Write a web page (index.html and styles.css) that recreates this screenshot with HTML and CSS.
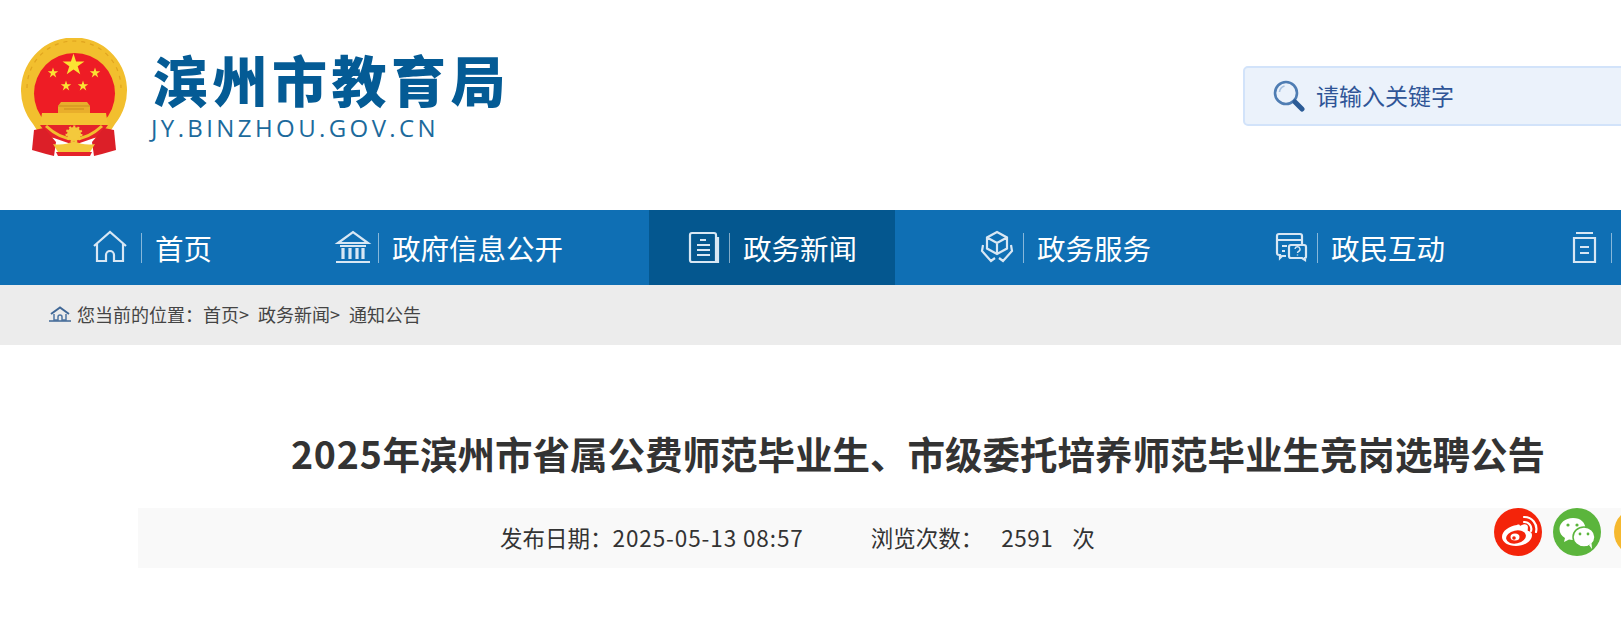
FILE: index.html
```html
<!DOCTYPE html>
<html lang="zh-CN">
<head>
<meta charset="utf-8">
<title>2025年滨州市省属公费师范毕业生、市级委托培养师范毕业生竞岗选聘公告</title>
<link rel="stylesheet" href="styles.css">
</head>
<body>
<div class="page">

    <div class="header">
        <div class="logo">
            <svg class="emblem" viewBox="0 0 108 120">
                <defs>
                    <polygon id="star" points="0,-1 .225,-.309 .951,-.309 .363,.118 .588,.809 0,.382 -.588,.809 -.363,.118 -.951,-.309 -.225,-.309"/>
                </defs>
                <path d="M13 86A53 53 0 1 1 95 86L86 100H22z" fill="#f2bf2e"/>
                <path d="M7 50A47 47 0 0 1 101 50" fill="none" stroke="#e0a41f" stroke-width="1.200" stroke-dasharray="4 5"/>
                <circle cx="54.500" cy="55.500" r="40.500" fill="#ee1c25"/>
                <use href="#star" transform="translate(53.500 27) scale(11.500)" fill="#fbe233"/>
                <use href="#star" transform="translate(33 35) scale(5.500)" fill="#fbe233"/>
                <use href="#star" transform="translate(75 35) scale(5.500)" fill="#fbe233"/>
                <use href="#star" transform="translate(46 48) scale(5.500)" fill="#fbe233"/>
                <use href="#star" transform="translate(63 48) scale(5.500)" fill="#fbe233"/>
                <path d="M41 64h26l3 4v7H38v-7z" fill="#e9ae2b"/>
                <path d="M38 68h32M44 71h20" stroke="#c98f1e" stroke-width="1"/>
                <path d="M22 75h64l2 12H20z" fill="#f4c233"/>
                <path d="M20 87h68l-8 11-26 9-26-9z" fill="#e5222a"/>
                <path d="M26 88Q54 114 82 88" fill="none" stroke="#f2bf2e" stroke-width="3"/>
                <circle cx="54" cy="96" r="7" fill="#f4c93c" stroke="#f4c93c" stroke-width="3" stroke-dasharray="2 2"/>
                <path d="M14 92L24 90 36 104 34 118 26 116 12 112z" fill="#dc1f28"/>
                <path d="M94 92L84 90 72 104 74 118 82 116 96 112z" fill="#dc1f28"/>
                <path d="M33 106Q44 108 54 103 64 108 75 106L70 114H38z" fill="#f4c93c"/>
                <path d="M36 114H72L70 118H38z" fill="#e5222a"/>
            </svg>
            <div class="logo-text">
                <div class="logo-name">滨州市教育局</div>
                <div class="logo-url">JY.BINZHOU.GOV.CN</div>
            </div>
        </div>
        <div class="search">
            <svg class="search-icon" viewBox="0 0 32 32">
                <circle cx="13" cy="13" r="11" fill="none" stroke="#4f7db3" stroke-width="2.600"/>
                <path d="M6.500 12a7 7 0 0 1 5-6" fill="none" stroke="#a9c2e0" stroke-width="1.600"/>
                <path d="M22 22l7 7" stroke="#2b5b96" stroke-width="5" stroke-linecap="round"/>
            </svg>
            <span class="search-text">请输入关键字</span>
        </div>
    </div>

    <div class="nav">
        <a class="nav-item" href="#">
            <svg class="nav-icon" viewBox="0 0 46 40">
                <path d="M1 18L17 4l16 14M4 16v17h9v-6a4 4 0 0 1 8 0v6h9V16"/>
            </svg>
            <span class="nav-label">首页</span>
        </a>
        <a class="nav-item" href="#">
            <svg class="nav-icon" viewBox="0 0 46 40">
                <path d="M8 15L23 4l15 11zM10 18h26M6 34h34"/>
                <path class="nav-icon-thick" d="M13 20v11M20 20v11M27 20v11M33 20v11"/>
            </svg>
            <span class="nav-label">政府信息公开</span>
        </a>
        <a class="nav-item active" href="#">
            <svg class="nav-icon" viewBox="0 0 46 40">
                <path d="M11 5h22a2 2 0 0 1 2 2v27H11a2 2 0 0 1-2-2V7a2 2 0 0 1 2-2zM35 10h2v24h-2M19 12h6M16 17h13M16 22h13M16 27h13"/>
            </svg>
            <span class="nav-label">政务新闻</span>
        </a>
        <a class="nav-item" href="#">
            <svg class="nav-icon" viewBox="0 0 46 40">
                <path d="M22 4l10 5.500v11L22 26l-10-5.500v-11zM12 9.500l10 5.500 10-5.500M22 15v11M8 17l-1 6 9 10 4-3M36 17l1 6-9 10-4-3"/>
            </svg>
            <span class="nav-label">政务服务</span>
        </a>
        <a class="nav-item" href="#">
            <svg class="nav-icon" viewBox="0 0 46 40">
                <path d="M17 28h-4l-2 2v-3H10a2 2 0 0 1-2-2V8a2 2 0 0 1 2-2h21a2 2 0 0 1 2 2v8M8 12h25M13 18h5M13 23h3"/>
                <path d="M22 17h13a2 2 0 0 1 2 2v10a1 1 0 0 1-1 1v2l-3-2H22a2 2 0 0 1-2-2V19a2 2 0 0 1 2-2z"/>
                <path class="nav-icon-thin" d="M26 21a2.500 2.500 0 1 1 3.500 2.500c-.8.4-1 .8-1 1.500M28.500 26.500v1"/>
            </svg>
            <span class="nav-label">政民互动</span>
        </a>
        <a class="nav-item" href="#">
            <svg class="nav-icon" viewBox="0 0 46 40">
                <path d="M13 5h17M11 10h21v24H11zM17 19h9M17 25h9"/>
            </svg>
            <span class="nav-label"></span>
        </a>
    </div>

    <div class="crumb">
        <svg class="crumb-icon" viewBox="0 0 22 16">
            <path d="M2 8l9-6.500L20 8" fill="none" stroke="#3f6796" stroke-width="2"/>
            <path d="M5 8v6h4v-3a2 2 0 0 1 4 0v3h4V8" fill="none" stroke="#4f76a3" stroke-width="1.500"/>
            <path d="M0 15h22" stroke="#3f6796" stroke-width="1.500"/>
        </svg>
        <span>您当前的位置：</span>
        <a class="crumb-link" href="#">首页&gt; </a>
        <a class="crumb-link" href="#">政务新闻&gt; </a>
        <a class="crumb-link" href="#">通知公告</a>
    </div>

    <div class="article">
        <h1 class="title"><span class="title-year">2025</span>年滨州市省属公费师范毕业生、市级委托培养师范毕业生竞岗选聘公告</h1>
        <div class="meta">
            <span>发布日期：</span>
            <span class="meta-date">2025-05-13 08:57</span>
            <span class="meta-views">浏览次数：</span>
            <span class="meta-count">2591</span>
            <span>次</span>
            <div class="share">
                <a class="share-btn weibo" href="#">
                    <svg viewBox="0 0 48 48">
                        <path d="M23 17c-8 1-15 6-15 12 0 5 6 9 14 9 9 0 16-5 16-11 0-3-3-4-4-4-1-1 1-4-1-6s-6 0-7 1c0-1-1-2-3-1z" fill="#fff"/>
                        <ellipse cx="22" cy="29" rx="10" ry="6.500" fill="#f4240a" transform="rotate(-12 22 29)"/>
                        <ellipse cx="21" cy="29" rx="4.500" ry="3.500" fill="#fff"/>
                        <circle cx="20" cy="30" r="1.800" fill="#f4240a"/>
                        <path d="M30 14a7 7 0 0 1 7 9M30 9a12 12 0 0 1 12 15" fill="none" stroke="#fff" stroke-width="2.200" stroke-linecap="round"/>
                    </svg>
                </a>
                <a class="share-btn wechat" href="#">
                    <svg viewBox="0 0 48 48">
                        <path d="M20 10c-8 0-13.500 5-13.500 11 0 4 2 7 5.500 9l-1 4 5-2.500c1 .3 2 .4 3.500 .4 8 0 13-5 13-11S28 10 20 10z" fill="#fff"/>
                        <ellipse cx="31" cy="29" rx="11" ry="10" fill="#fff" stroke="#5bb53c" stroke-width="1.500"/>
                        <path d="M36 37l3 4-.5-6z" fill="#fff"/>
                        <circle cx="15" cy="17" r="1.600" fill="#5bb53c"/>
                        <circle cx="24" cy="17" r="1.600" fill="#5bb53c"/>
                        <circle cx="27" cy="26" r="1.400" fill="#5bb53c"/>
                        <circle cx="35" cy="26" r="1.400" fill="#5bb53c"/>
                    </svg>
                </a>
                <a class="share-btn third" href="#"></a>
            </div>
        </div>
    </div>

</div>
</body>
</html>
```
FILE: styles.css
```css
@charset "utf-8";

* {
    margin: 0;
    padding: 0;
    box-sizing: border-box;
}

html, body {
    height: 100%;
    overflow: hidden;
    background: #fff;
}

body {
    font-family: "Noto Sans CJK SC", "Noto Sans", sans-serif;
    color: #333;
}

a {
    color: inherit;
    text-decoration: none;
}

.page {
    width: 1840px;
}

/* header */
.header {
    display: flex;
    justify-content: space-between;
    height: 210px;
    padding: 38px 97px 0 20px;
}

.logo {
    display: flex;
}

.emblem {
    width: 108px;
    height: 120px;
    filter: blur(.4px);
}

.logo-text {
    margin-left: 25px;
}

.logo-name {
    margin-top: 7px;
    font-size: 55px;
    line-height: 66px;
    font-weight: 900;
    letter-spacing: 4.500px;
    color: #045b95;
}

.logo-url {
    margin-top: 3px;
    margin-left: -2px;
    font-family: "Open Sans", sans-serif;
    font-size: 24px;
    line-height: 28px;
    letter-spacing: 3.400px;
    color: #1c6a9c;
}

.search {
    display: flex;
    align-items: center;
    width: 500px;
    height: 60px;
    margin-top: 28px;
    padding-left: 28px;
    background: #ebf2fb;
    border: 2px solid #d2e3fa;
    border-radius: 5px;
}

.search-icon {
    width: 32px;
    height: 32px;
}

.search-text {
    margin: 0 0 3px 11px;
    font-size: 23px;
    color: #2f5597;
}

/* nav */
.nav {
    display: flex;
    gap: 48px;
    height: 75px;
    padding-left: 61px;
    background: #0f6fb4;
}

.nav-item {
    display: flex;
    align-items: center;
    padding: 0 38px 0 32px;
    font-size: 28.500px;
    color: #fff;
}

.nav-item.active {
    background: #04578f;
}

.nav-icon {
    width: 46px;
    height: 40px;
    margin-right: 2px;
    fill: none;
    stroke: #d8e7f4;
    stroke-width: 2.200;
}

.nav-icon-thin {
    stroke-width: 1.400;
}

.nav-icon-thick {
    stroke-width: 3.200;
}

.nav-label {
    height: 30px;
    padding-left: 13px;
    border-left: 1px solid rgba(255, 255, 255, .5);
    line-height: 30px;
}

/* breadcrumb */
.crumb {
    display: flex;
    align-items: center;
    height: 60px;
    padding: 0 0 2px 49px;
    background: #ececec;
    font-size: 18px;
    color: #444;
}

.crumb-icon {
    width: 22px;
    height: 16px;
    margin-right: 6px;
}

.crumb-link {
    margin-right: 5px;
    white-space: pre;
}

/* article */
.article {
    width: 1560px;
    margin-left: 138px;
}

.title {
    padding-top: 83px;
    font-size: 37.500px;
    line-height: 50px;
    font-weight: 700;
    text-align: center;
    color: #333;
}

.title-year {
    letter-spacing: .8px;
}

.meta {
    position: relative;
    display: flex;
    align-items: center;
    height: 60px;
    margin-top: 30px;
    padding: 0 0 2px 362px;
    background: #f9f9f9;
    font-size: 22.500px;
}

.meta-date {
    margin-right: 67px;
    letter-spacing: .9px;
}

.meta-views {
    margin-right: 18px;
}

.meta-count {
    margin-right: 19px;
    letter-spacing: .5px;
}

.share {
    position: absolute;
    left: 1356px;
    top: 0;
    display: flex;
    gap: 11px;
}

.share-btn {
    display: block;
    width: 48px;
    height: 48px;
    border-radius: 50%;
}

.share-btn svg {
    display: block;
}

.weibo {
    background: #f4240a;
}

.wechat {
    background: #5bb53c;
}

.third {
    margin-left: 2px;
    background: #f5b82e;
}
```
